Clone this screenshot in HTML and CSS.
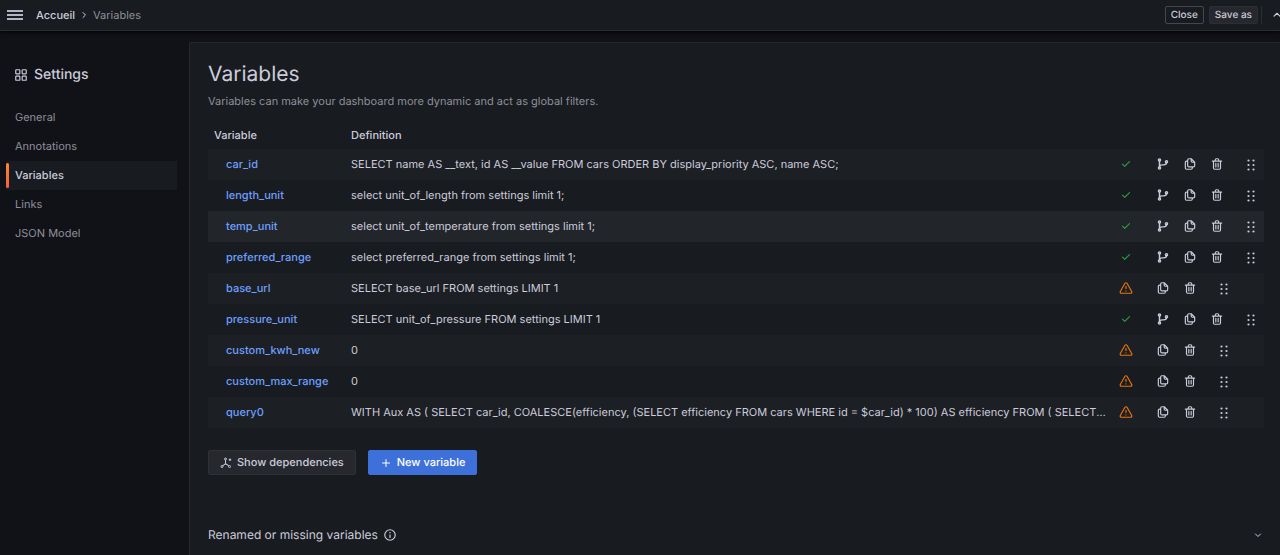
FILE: index.html
```html
<!DOCTYPE html>
<html lang="en">
<head>
    <meta charset="UTF-8">
    <title>Variables - Settings</title>
    <link rel="stylesheet" href="styles.css">
</head>
<body>
<!-- icons -->
<svg class="sprite">
    <symbol id="check" viewBox="0 0 24 24"><path d="M18.71,7.21a1,1,0,0,0-1.42,0L9.84,14.67,6.71,11.53A1,1,0,1,0,5.29,13l3.84,3.84a1,1,0,0,0,1.42,0l8.16-8.16A1,1,0,0,0,18.71,7.21Z"/></symbol>
    <symbol id="warning" viewBox="0 0 24 24"><path d="M12,16a1,1,0,1,0,1,1A1,1,0,0,0,12,16Zm10.67,1.47-8.05-14a3,3,0,0,0-5.24,0l-8,14A3,3,0,0,0,3.94,22H20.06a3,3,0,0,0,2.61-4.53Zm-1.73,2a1,1,0,0,1-.88.51H3.94a1,1,0,0,1-.88-.51,1,1,0,0,1,0-1l8-14a1,1,0,0,1,1.78,0l8.05,14A1,1,0,0,1,20.94,19.49ZM12,8a1,1,0,0,0-1,1v4a1,1,0,0,0,2,0V9A1,1,0,0,0,12,8Z"/></symbol>
    <symbol id="branch" viewBox="0 0 24 24"><g fill="none" stroke="currentColor" stroke-width="2.5"><circle cx="6" cy="5" r="1.800"/><circle cx="6" cy="19" r="1.800"/><circle cx="18" cy="8" r="1.800"/><path d="M6 7v10M18 10c0 3-2 3.500-5 3.500h-2c-3 0-5 1-5 3.500"/></g></symbol>
    <symbol id="copy" viewBox="0 0 24 24"><path d="M21,8.94a1.31,1.31,0,0,0-.06-.27l0-.09a1.07,1.07,0,0,0-.19-.28h0l-6-6h0a1.07,1.07,0,0,0-.28-.19.32.32,0,0,0-.09,0A.88.88,0,0,0,14.05,2H10A3,3,0,0,0,7,5V6H6A3,3,0,0,0,3,9V19a3,3,0,0,0,3,3h8a3,3,0,0,0,3-3V18h1a3,3,0,0,0,3-3V9S21,9,21,8.94ZM15,5.41,17.59,8H16a1,1,0,0,1-1-1ZM15,19a1,1,0,0,1-1,1H6a1,1,0,0,1-1-1V9A1,1,0,0,1,6,8H7v7a3,3,0,0,0,3,3h5Zm4-4a1,1,0,0,1-1,1H10a1,1,0,0,1-1-1V5a1,1,0,0,1,1-1h3V7a3,3,0,0,0,3,3h3Z"/></symbol>
    <symbol id="trash" viewBox="0 0 24 24"><path d="M10,18a1,1,0,0,0,1-1V11a1,1,0,0,0-2,0v6A1,1,0,0,0,10,18ZM20,6H16V5a3,3,0,0,0-3-3H11A3,3,0,0,0,8,5V6H4A1,1,0,0,0,4,8H5V19a3,3,0,0,0,3,3h8a3,3,0,0,0,3-3V8h1a1,1,0,0,0,0-2ZM10,5a1,1,0,0,1,1-1h2a1,1,0,0,1,1,1V6H10Zm7,14a1,1,0,0,1-1,1H8a1,1,0,0,1-1-1V8H17Zm-3-1a1,1,0,0,0,1-1V11a1,1,0,0,0-2,0v6A1,1,0,0,0,14,18Z"/></symbol>
    <symbol id="drag" viewBox="0 0 14 14"><circle cx="4.500" cy="2.500" r="1.100"/><circle cx="9.500" cy="2.500" r="1.100"/><circle cx="4.500" cy="7" r="1.100"/><circle cx="9.500" cy="7" r="1.100"/><circle cx="4.500" cy="11.500" r="1.100"/><circle cx="9.500" cy="11.500" r="1.100"/></symbol>
    <symbol id="apps" viewBox="0 0 24 24"><g fill="none" stroke="currentColor" stroke-width="2"><rect x="3" y="3" width="7" height="7" rx="1"/><rect x="14" y="3" width="7" height="7" rx="1"/><rect x="3" y="14" width="7" height="7" rx="1"/><rect x="14" y="14" width="7" height="7" rx="1"/></g></symbol>
    <symbol id="graph" viewBox="0 0 24 24"><g fill="none" stroke="currentColor" stroke-width="2"><circle cx="11" cy="4" r="2"/><circle cx="4" cy="19" r="2"/><circle cx="19" cy="19" r="2"/><path d="M11 6v7M11 13l-5.500 4.500M11 13l6.500 4.500M7.500 16c2-2 5-2 7.500 0M20 3v5M17.500 5.500h5"/></g></symbol>
    <symbol id="plus" viewBox="0 0 24 24"><path d="M19,11H13V5a1,1,0,0,0-2,0v6H5a1,1,0,0,0,0,2h6v6a1,1,0,0,0,2,0V13h6a1,1,0,0,0,0-2Z"/></symbol>
    <symbol id="info" viewBox="0 0 24 24"><g fill="none" stroke="currentColor" stroke-width="2"><circle cx="12" cy="12" r="9"/><path d="M12 11v6M12 7v2"/></g></symbol>
    <symbol id="angle" viewBox="0 0 24 24"><path d="M7 10l5 5 5-5" fill="none" stroke="currentColor" stroke-width="2" stroke-linecap="round" stroke-linejoin="round"/></symbol>
</svg>

<header class="topbar">
    <button class="menu" aria-label="Menu"><span></span><span></span><span></span></button>
    <nav class="crumbs">
        <a href="#">Accueil</a>
        <svg class="icon sep"><use href="#angle"/></svg>
        <span>Variables</span>
    </nav>
    <div class="tools">
        <button class="btn-small outline">Close</button>
        <button class="btn-small">Save as</button>
        <button class="collapse" aria-label="Collapse"><svg class="icon"><use href="#angle"/></svg></button>
    </div>
</header>

<div class="page">
    <aside class="side">
        <h2><svg class="icon"><use href="#apps"/></svg>Settings</h2>
        <ul>
            <li><a href="#">General</a></li>
            <li><a href="#">Annotations</a></li>
            <li><a href="#" class="current">Variables</a></li>
            <li><a href="#">Links</a></li>
            <li><a href="#">JSON Model</a></li>
        </ul>
    </aside>

    <main class="panel">
        <h1>Variables</h1>
        <p class="desc">Variables can make your dashboard more dynamic and act as global filters.</p>

        <table>
            <thead>
                <tr><th class="col-name">Variable</th><th>Definition</th><th class="col-tools"></th></tr>
            </thead>
            <tbody id="rows"></tbody>
        </table>

        <div class="buttons">
            <button class="btn"><svg class="icon"><use href="#graph"/></svg>Show dependencies</button>
            <button class="btn primary"><svg class="icon"><use href="#plus"/></svg>New variable</button>
        </div>

        <div class="missing">
            <h3>Renamed or missing variables <svg class="icon"><use href="#info"/></svg></h3>
            <button aria-label="Expand"><svg class="icon"><use href="#angle"/></svg></button>
        </div>
    </main>
</div>

<script src="main.js"></script>
</body>
</html>
```
FILE: styles.css
```css
* {
    padding: 0;
    margin: 0;
    box-sizing: border-box;
    list-style: none;
}

body {
    background: #111217;
    color: #ccccdc;
    font-family: Inter, "Liberation Sans", sans-serif;
    font-size: 12px;
    line-height: 19px;
    font-optical-sizing: none;
    text-rendering: geometricPrecision;
    min-height: 100vh;
    display: flex;
    flex-direction: column;
}

a {
    color: inherit;
    text-decoration: none;
}

button {
    font: inherit;
    color: inherit;
    background: none;
    border: 0;
    cursor: pointer;
    text-rendering: inherit;
}

.sprite {
    display: none;
}

.icon {
    width: 14px;
    height: 14px;
    fill: currentColor;
    flex: none;
    display: block;
}

/* top bar */
.topbar {
    display: flex;
    align-items: center;
    height: 31px;
    padding-left: 7px;
    background: #181b1f;
    border-bottom: 1px solid #2a2c31;
    box-shadow: 0 1px 4px #000;
    overflow: hidden;
}

.menu {
    width: 16px;
    display: flex;
    flex-direction: column;
    gap: 2px;
}

.menu span {
    height: 2px;
    background: #b4b4c2;
}

.crumbs {
    display: flex;
    align-items: center;
    gap: 3px;
    margin-left: 13px;
    font-size: 11px;
}

.crumbs a {
    font-weight: 500;
}

.crumbs span {
    color: #8e8f9a;
}

.crumbs .sep {
    width: 12px;
    height: 12px;
    transform: rotate(-90deg);
}

.tools {
    display: flex;
    align-items: center;
    gap: 3px;
    margin-left: auto;
}

.btn-small {
    height: 18px;
    padding: 0 5px;
    background: #26282d;
    border: 1px solid #2c2e33;
    border-radius: 2px;
    font-size: 10px;
    font-weight: 500;
    line-height: 16px;
}

.btn-small.outline {
    margin-right: 2px;
    background: none;
    border-color: #45474e;
}

.collapse {
    height: 18px;
    padding-left: 8px;
    margin-right: -4px;
    border-left: 1px solid #2c2e33;
}

.collapse .icon {
    transform: rotate(180deg);
}

/* left menu */
.page {
    flex: 1;
    display: flex;
    padding-top: 11px;
}

.side {
    width: 189px;
    flex: none;
    padding: 23px 12px 0 6px;
}

.side h2 {
    display: flex;
    align-items: center;
    gap: 6px;
    padding-left: 8px;
    margin-bottom: 18px;
    font-size: 14px;
    font-weight: 500;
    line-height: 20px;
}

.side li {
    height: 29px;
}

.side a {
    display: block;
    padding-left: 9px;
    color: #8e8f9a;
    font-size: 11px;
    line-height: 29px;
    position: relative;
}

.side a.current {
    background: #181b1f;
    color: #ccccdc;
    font-weight: 500;
}

.side a.current::before {
    content: "";
    position: absolute;
    left: 0;
    top: 2px;
    bottom: 2px;
    width: 3px;
    border-radius: 2px;
    background: linear-gradient(#ff8833, #f55f3e);
}

/* content */
.panel {
    flex: 1;
    min-width: 0;
    padding: 19px 16px 0 18px;
    background: #181b1f;
    border: 1px solid #26282d;
    border-width: 1px 0 0 1px;
    border-radius: 2px 0 0 0;
}

h1 {
    font-size: 21px;
    font-weight: 400;
    line-height: 26px;
}

.desc {
    margin-top: 4px;
    color: #8e8f9a;
    font-size: 11px;
}

table {
    width: 100%;
    margin-top: 10px;
    border-collapse: collapse;
    table-layout: fixed;
    font-size: 11px;
}

th {
    height: 28px;
    padding-left: 6px;
    text-align: left;
    font-weight: 500;
}

.col-name {
    width: 137px;
}

.col-tools {
    width: 156px;
}

td {
    height: 31px;
    padding-left: 6px;
    overflow: hidden;
    white-space: nowrap;
    text-overflow: ellipsis;
}

td:first-child {
    padding-left: 18px;
}

td a {
    color: #6e9fff;
    font-weight: 500;
}

tbody tr:nth-child(odd) {
    background: #1c1f23;
}

tbody tr.hover {
    background: #22252a;
}

.actions {
    display: flex;
    align-items: center;
    padding: 0 0 2px 5px;
}

.actions button {
    margin-right: 13px;
}

.status {
    margin-right: 23px;
}

.ok {
    color: #299c46;
}

.warn {
    color: #e5740c;
}

.actions .drag {
    margin-left: 7px;
    margin-right: 0;
    padding-top: 3px;
}

.buttons {
    display: flex;
    gap: 12px;
    margin-top: 22px;
}

.btn {
    display: flex;
    align-items: center;
    gap: 5px;
    height: 25px;
    padding: 0 11px;
    background: #26282d;
    border: 1px solid #303238;
    border-radius: 2px;
    font-size: 11px;
    font-weight: 500;
}

.btn .icon {
    width: 12px;
    height: 12px;
}

.btn.primary {
    background: #3d71d9;
    border-color: #3d71d9;
    color: #fff;
}

.missing {
    display: flex;
    justify-content: space-between;
    align-items: center;
    margin-top: 50px;
}

.missing h3 {
    display: flex;
    align-items: center;
    gap: 5px;
    font-size: 12px;
    font-weight: 400;
    line-height: 20px;
}

.missing button .icon {
    width: 12px;
    height: 12px;
}
```
FILE: main.js
```js
var list = [
  ['car_id', 'SELECT name AS __text, id AS __value FROM cars ORDER BY display_priority ASC, name ASC;', true],
  ['length_unit', 'select unit_of_length from settings limit 1;', true],
  ['temp_unit', 'select unit_of_temperature from settings limit 1;', true],
  ['preferred_range', 'select preferred_range from settings limit 1;', true],
  ['base_url', 'SELECT base_url FROM settings LIMIT 1', false],
  ['pressure_unit', 'SELECT unit_of_pressure FROM settings LIMIT 1', true],
  ['custom_kwh_new', '0', false],
  ['custom_max_range', '0', false],
  ['query0', 'WITH Aux AS ( SELECT car_id, COALESCE(efficiency, (SELECT efficiency FROM cars WHERE id = $car_id) * 100) AS efficiency FROM ( SELECT ROW_NUMBER() OVER', false]
];

function icon(name) {
  return '<svg class="icon"><use href="#' + name + '"/></svg>';
}

function button(name, label, cls) {
  return '<button class="' + (cls || '') + '" aria-label="' + label + '">' + icon(name) + '</button>';
}

var html = '';
for (var i = 0; i < list.length; i++) {
  var used = list[i][2];
  html += '<tr class="' + (i === 2 ? 'hover' : '') + '">' +
    '<td><a href="#">' + list[i][0] + '</a></td>' +
    '<td>' + list[i][1] + '</td>' +
    '<td><div class="actions">' +
    '<span class="status ' + (used ? 'ok' : 'warn') + '">' + icon(used ? 'check' : 'warning') + '</span>' +
    // only used variables have usages to show
    (used ? button('branch', 'Show usages') : '') +
    button('copy', 'Duplicate') +
    button('trash', 'Remove') +
    button('drag', 'Drag', 'drag') +
    '</div></td></tr>';
}
document.getElementById('rows').innerHTML = html;
```
